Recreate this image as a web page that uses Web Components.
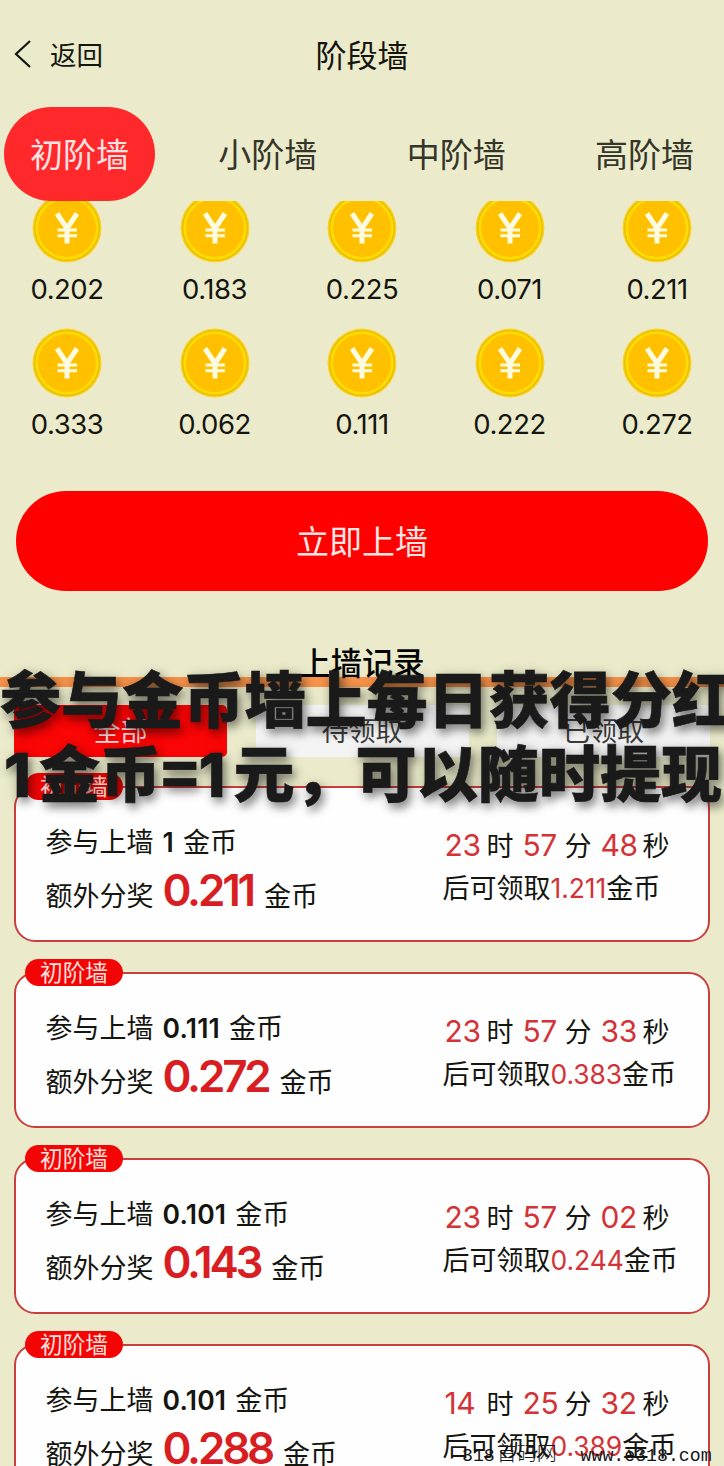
<!DOCTYPE html>
<html lang="zh-CN">
<head>
<meta charset="utf-8">
<title>阶段墙</title>
<style>
html, body {
    margin: 0;
    height: 1466px;
    overflow: hidden;
}
body {
    background: #ebebcb;
    color: #151510;
    font-family: "Noto Sans CJK SC", sans-serif;
    --digits: Inter, "Noto Sans CJK SC", sans-serif;
}
</style>
</head>
<body>
<wall-page></wall-page>
<script>
class NavBar extends HTMLElement {
    constructor() {
        super();
        this.attachShadow({mode: "open"}).innerHTML = `
        <style>
        :host {
            display: grid;
            grid-template-columns: 1fr auto 1fr;
            align-items: center;
            height: 107px;
            padding: 0 14px 1px 14px;
            box-sizing: border-box;
        }
        .back {
            display: flex;
            align-items: center;
            gap: 17px;
            font-size: 26.5px;
        }
        .back svg {
            margin-top: 2px;
        }
        .title {
            font-size: 31px;
        }
        </style>
        <div class="back">
            <svg width="19" height="30" viewBox="0 0 19 30" fill="none" stroke="#151510" stroke-width="2.2">
                <path d="M16 2 L2 15 L16 28"/>
            </svg>
            <span>返回</span>
        </div>
        <div class="title"><slot></slot></div>
        `;
    }
}
customElements.define("nav-bar", NavBar);

class StageTabs extends HTMLElement {
    constructor() {
        super();
        this.attachShadow({mode: "open"}).innerHTML = `
        <style>
        :host {
            display: flex;
            justify-content: space-between;
            height: 94px;
            padding: 0 4px;
        }
        ::slotted(*) {
            width: 151px;
            height: 94px;
            border-radius: 47px;
            line-height: 92px;
            text-align: center;
            font-size: 33px;
            color: #35352a;
        }
        ::slotted(.active) {
            background: #ff282b;
            color: #ffe3e3;
        }
        </style>
        <slot></slot>
        `;
    }
}
customElements.define("stage-tabs", StageTabs);

class CoinItem extends HTMLElement {
    connectedCallback() {
        this.attachShadow({mode: "open"}).innerHTML = `
        <style>
        :host {
            display: flex;
            flex-direction: column;
            align-items: center;
            width: 74px;
            height: 134.5px;
        }
        svg {
            flex: none;
        }
        .amount {
            margin-top: 6px;
            line-height: 40px;
            font-family: var(--digits);
            font-size: 27.5px;
            letter-spacing: -.5px;
            white-space: nowrap;
        }
        </style>
        <svg width="70" height="70" viewBox="0 0 70 70">
            <circle cx="35" cy="35" r="34.5" fill="#ffd21c"/>
            <circle cx="35" cy="35" r="32.3" fill="#ffc400" stroke="#e6bf13" stroke-width="1.6"/>
            <circle cx="35" cy="35" r="30.2" fill="#ffc000" stroke="#ffdc00" stroke-width="2.6"/>
            <path d="M25.5 37 H45 M25.5 42.8 H45" fill="none" stroke="#fffbe0" stroke-width="3"/>
            <path d="M25 20.5 L35 35.5 L45 20.5 M35 34 V50.5" fill="none" stroke="#fffbe0" stroke-width="5"/>
        </svg>
        <span class="amount">${this.getAttribute("amount")}</span>
        `;
    }
}
customElements.define("coin-item", CoinItem);

class CoinWall extends HTMLElement {
    connectedCallback() {
        const coins = this.getAttribute("coins").split(" ");
        this.attachShadow({mode: "open"}).innerHTML = `
        <style>
        :host {
            display: flex;
            align-items: flex-end;
            height: 261px;
            overflow: hidden;
        }
        .grid {
            flex: 1;
            display: grid;
            grid-template-columns: repeat(5, 74px);
            justify-content: space-between;
            padding: 0 30px;
        }
        </style>
        <div class="grid">
            ${coins.map(c => `<coin-item amount="${c}"></coin-item>`).join("")}
        </div>
        `;
    }
}
customElements.define("coin-wall", CoinWall);

class WallButton extends HTMLElement {
    constructor() {
        super();
        this.attachShadow({mode: "open"}).innerHTML = `
        <style>
        :host {
            display: block;
            margin: 29px 16px 0;
            height: 100px;
            border-radius: 50px;
            background: #fe0000;
            color: #ffe6e3;
            font-size: 33px;
            line-height: 98px;
            text-align: center;
        }
        </style>
        <slot></slot>
        `;
    }
}
customElements.define("wall-button", WallButton);

class RecordTabs extends HTMLElement {
    constructor() {
        super();
        this.attachShadow({mode: "open"}).innerHTML = `
        <style>
        :host {
            display: block;
            padding-top: 49px;
        }
        .heading {
            height: 37px;
            line-height: 44px;
            text-align: center;
            font-size: 31.3px;
            font-weight: 500;
            color: #050505;
        }
        .line {
            height: 10px;
            background: #f6924a;
        }
        .tabs {
            display: flex;
            justify-content: space-between;
            margin: 18px 14px 0;
        }
        .tabs div {
            width: 213px;
            height: 52px;
            border-radius: 5px;
            background: #f4f4f4;
            color: #3c3c3c;
            line-height: 50px;
            text-align: center;
            font-size: 27px;
        }
        .tabs .active {
            background: #fb0606;
            color: #ffdcdc;
        }
        </style>
        <div class="heading"><slot></slot></div>
        <div class="line"></div>
        <div class="tabs">
            <div class="active">全部</div>
            <div>待领取</div>
            <div>已领取</div>
        </div>
        `;
    }
}
customElements.define("record-tabs", RecordTabs);

class RecordCard extends HTMLElement {
    set record(record) {
        this._record = record;
        this.render();
    }

    render() {
        const r = this._record;
        if (!this.shadowRoot) this.attachShadow({mode: "open"});
        this.shadowRoot.innerHTML = `
        <style>
        :host {
            display: flex;
            justify-content: space-between;
            position: relative;
            box-sizing: border-box;
            height: 156px;
            padding: 0 0 0 29.5px;
            border: 2px solid #c8403e;
            border-radius: 21px;
            background: #fefefe;
            font-size: 27px;
            white-space: nowrap;
        }
        .badge {
            position: absolute;
            left: 9px;
            top: -15px;
            width: 98px;
            height: 27px;
            border-radius: 14px;
            background: #f40505;
            color: #ffe0dc;
            font-size: 22.7px;
            line-height: 25px;
            text-align: center;
        }
        .left {
            padding-top: 26px;
        }
        .right {
            width: 265.5px;
            padding-top: 36px;
        }
        .row {
            display: flex;
            align-items: baseline;
            height: 54px;
            line-height: 54px;
        }
        .right .row {
            height: 42px;
            line-height: 42px;
        }
        .row span {
            line-height: 1;
            font-family: var(--digits);
        }
        .stake {
            margin: 0 9px;
            font-weight: 600;
            font-size: 26.5px;
            letter-spacing: .2px;
        }
        .bonus {
            margin: 0 11px 0 9px;
            font-weight: 600;
            font-size: 44px;
            letter-spacing: -3.2px;
            color: #d81e22;
        }
        .time {
            width: 36px;
            margin: 0 6px 0 2px;
            font-size: 30px;
            letter-spacing: -.4px;
            color: #d33337;
        }
        .time:nth-of-type(n + 2) {
            margin-left: 9px;
        }
        .total {
            font-size: 26.5px;
            letter-spacing: -.1px;
            color: #d33337;
        }
        </style>
        <div class="badge">初阶墙</div>
        <div class="left">
            <div class="row">参与上墙<span class="stake">${r.stake}</span>金币</div>
            <div class="row">额外分奖<span class="bonus">${r.bonus}</span>金币</div>
        </div>
        <div class="right">
            <div class="row"><span class="time">${r.time[0]}</span>时<span class="time">${r.time[1]}</span>分<span class="time">${r.time[2]}</span>秒</div>
            <div class="row">后可领取<span class="total">${r.total}</span>金币</div>
        </div>
        `;
    }
}
customElements.define("record-card", RecordCard);

class RecordList extends HTMLElement {
    constructor() {
        super();
        this.attachShadow({mode: "open"}).innerHTML = `
        <style>
        :host {
            display: flex;
            flex-direction: column;
            gap: 30px;
            padding: 29px 14px 0;
        }
        </style>
        `;
    }

    set records(records) {
        records.forEach(record => {
            const card = document.createElement("record-card");
            card.record = record;
            this.shadowRoot.appendChild(card);
        });
    }
}
customElements.define("record-list", RecordList);

// Promotional lettering that lies over the record section
class PromoCaption extends HTMLElement {
    constructor() {
        super();
        this.attachShadow({mode: "open"}).innerHTML = `
        <style>
        :host {
            position: absolute;
            left: 0;
            top: 660px;
            width: 724px;
            overflow: hidden;
            padding-bottom: 20px;
            color: #1a1a1a;
            font-size: 61.1px;
            font-weight: 900;
            line-height: 74px;
            white-space: nowrap;
            -webkit-text-stroke: .6px #1a1a1a;
            text-shadow: 3px 5px 9px rgba(0, 0, 0, .4), 2px 3px 14px rgba(0, 0, 0, .25);
        }
        div:first-child {
            margin-left: -6.5px;
        }
        div:last-child {
            margin-left: 4px;
        }
        .one {
            display: inline-block;
            width: 35px;
            font-family: var(--digits);
            line-height: 1;
            font-weight: 800;
        }
        </style>
        <div>参与金币墙上每日获得分红</div>
        <div><span class="one">1</span>金币=<span class="one">1</span>元，可以随时提现</div>
        `;
    }
}
customElements.define("promo-caption", PromoCaption);

class SiteMark extends HTMLElement {
    constructor() {
        super();
        this.attachShadow({mode: "open"}).innerHTML = `
        <style>
        :host {
            position: absolute;
            left: 462px;
            top: 1442px;
            display: flex;
            align-items: baseline;
            color: #151515;
            font-family: "Liberation Mono", "Noto Sans CJK SC", monospace;
            font-size: 18.2px;
            line-height: 28px;
            white-space: pre;
        }
        .cjk {
            margin: 0 2px;
            font-size: 20px;
            font-weight: 300;
        }
        </style>
        <span>318</span><span class="cjk">首码网</span><span>  www.e318.com</span>
        `;
    }
}
customElements.define("site-mark", SiteMark);

class WallPage extends HTMLElement {
    constructor() {
        super();
        this.attachShadow({mode: "open"}).innerHTML = `
        <style>
        :host {
            display: block;
            position: relative;
            width: 724px;
            height: 1466px;
            overflow: hidden;
        }
        </style>
        <nav-bar>阶段墙</nav-bar>
        <stage-tabs>
            <div class="active">初阶墙</div>
            <div>小阶墙</div>
            <div>中阶墙</div>
            <div>高阶墙</div>
        </stage-tabs>
        <coin-wall coins="0.202 0.183 0.225 0.071 0.211 0.333 0.062 0.111 0.222 0.272"></coin-wall>
        <wall-button>立即上墙</wall-button>
        <record-tabs>上墙记录</record-tabs>
        <record-list></record-list>
        <promo-caption></promo-caption>
        <site-mark></site-mark>
        `;
        this.shadowRoot.querySelector("record-list").records = [
            {stake: "1", bonus: "0.211", time: ["23", "57", "48"], total: "1.211"},
            {stake: "0.111", bonus: "0.272", time: ["23", "57", "33"], total: "0.383"},
            {stake: "0.101", bonus: "0.143", time: ["23", "57", "02"], total: "0.244"},
            {stake: "0.101", bonus: "0.288", time: ["14", "25", "32"], total: "0.389"}
        ];
    }
}
customElements.define("wall-page", WallPage);
</script>
</body>
</html>
